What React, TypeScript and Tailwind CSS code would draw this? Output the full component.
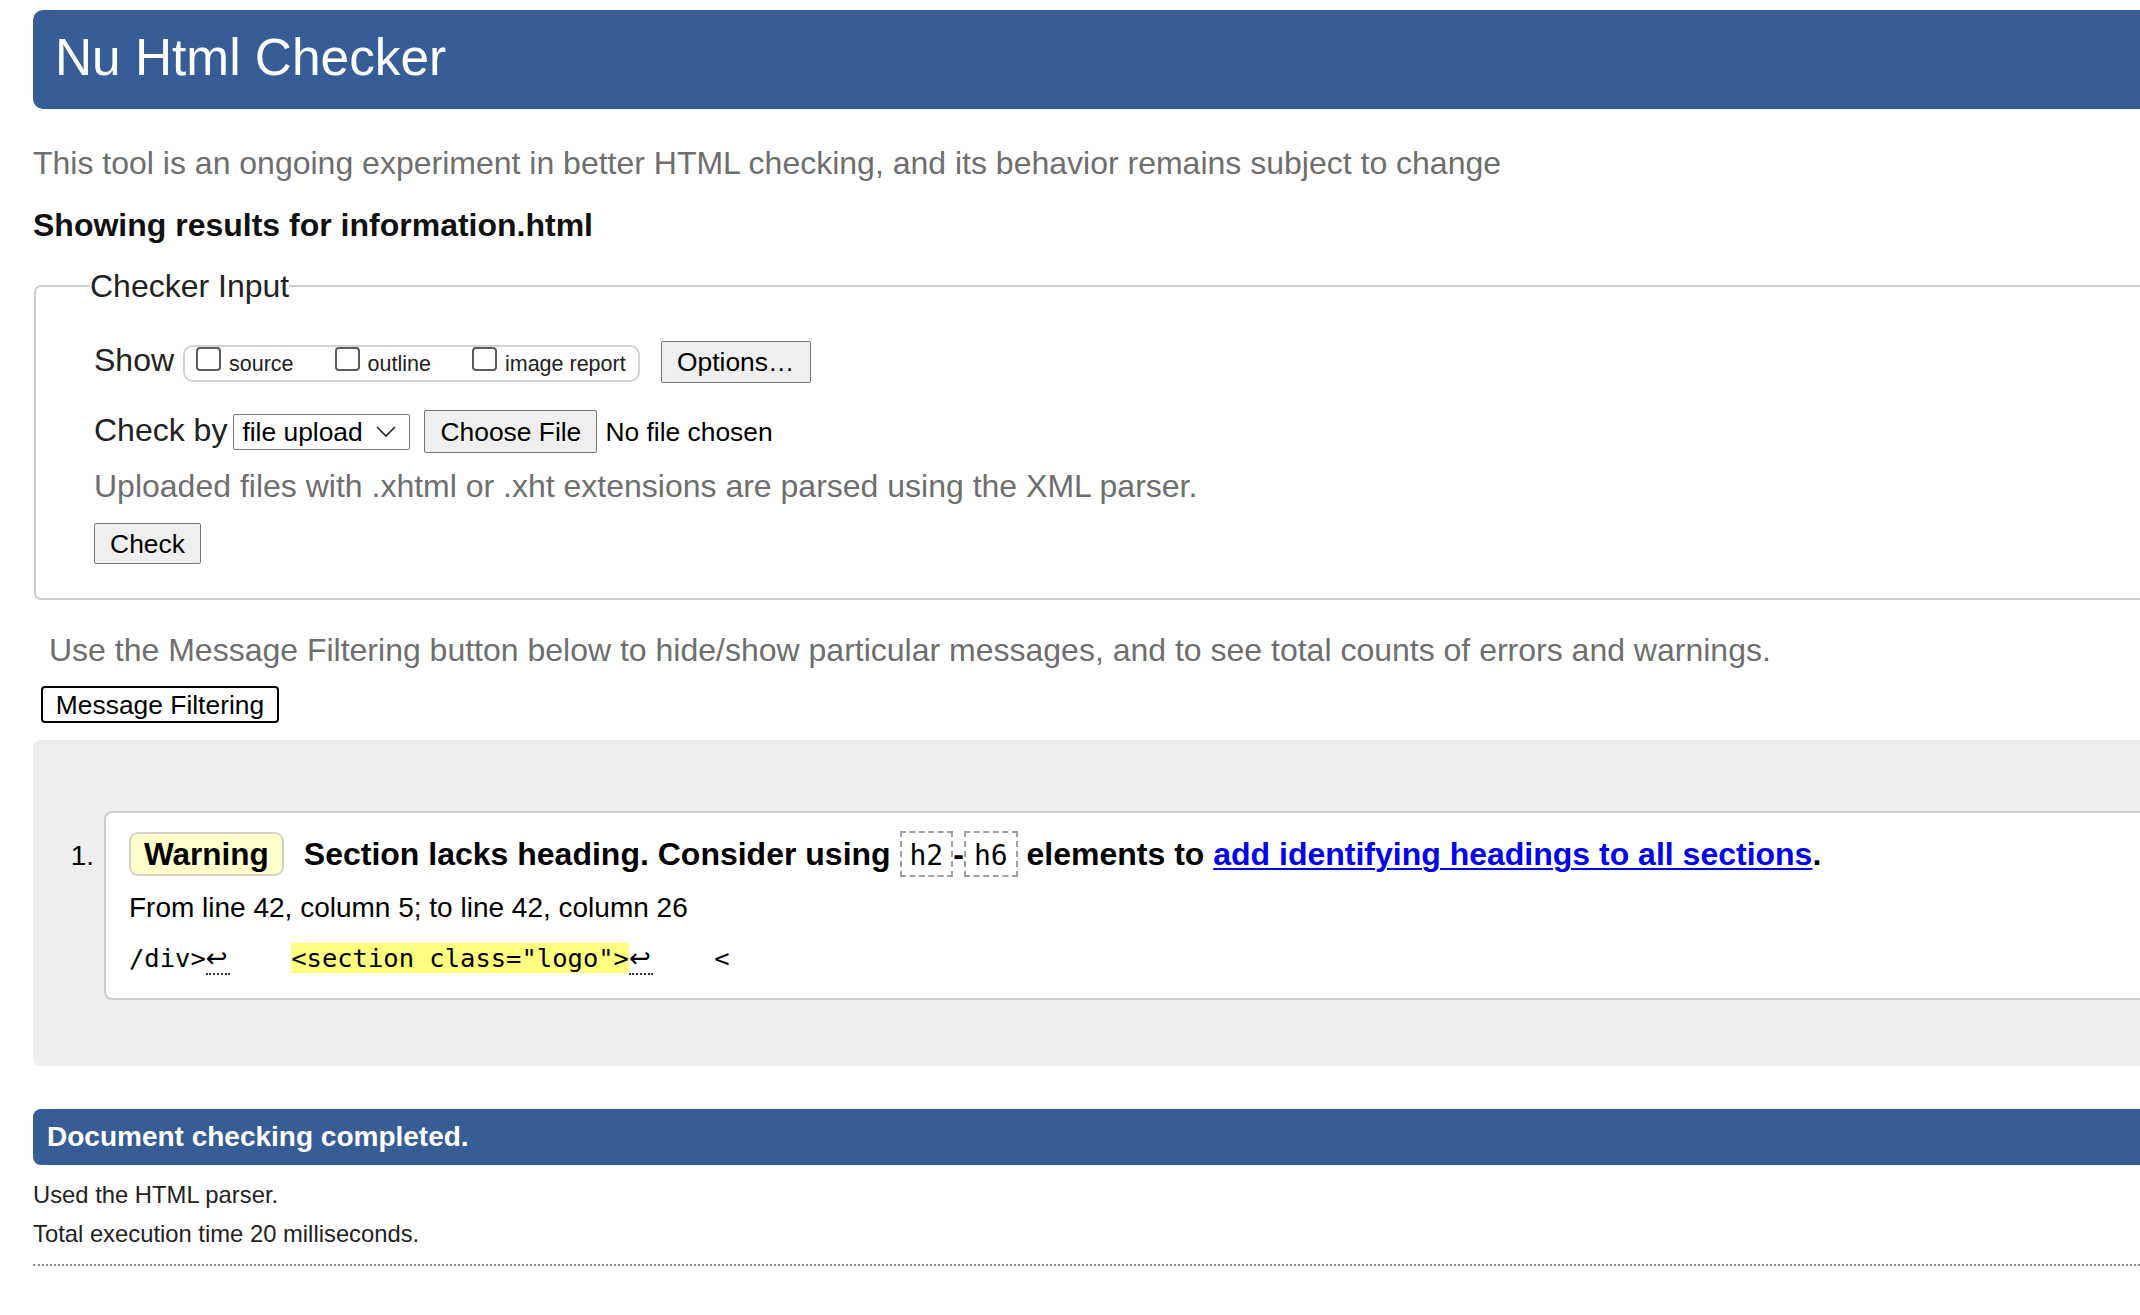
const FONT = "font-['Liberation_Sans',Arial,sans-serif]";
const MONO = "font-['DejaVu_Sans_Mono','Liberation_Mono',monospace]";

function Checkbox({ label, first }: { label: string; first?: boolean }) {
  return (
    <label className={`flex items-baseline ${first ? "" : "ml-[41px]"}`}>
      <span className="h-[24px] w-[25px] rounded-[4px] border-2 border-[#5c5c5c] bg-white" />
      <span className="ml-[8px] text-[21.5px] leading-[24px] text-[#222]">{label}</span>
    </label>
  );
}

function Code({ children }: { children: string }) {
  return (
    <span
      className={`${MONO} inline-block border-2 border-dashed border-[#a0a0a0] px-[8px] pt-[8px] pb-[4px] text-[28px] font-normal leading-[30px]`}
    >
      {children}
    </span>
  );
}

function LineFeed() {
  return (
    <span className="inline-block w-[24px] border-b-2 border-dotted border-[#333] font-['DejaVu_Sans',sans-serif] text-[26px] leading-[30px]">
      ↩
    </span>
  );
}

export default function App() {
  return (
    <div className={`w-full overflow-hidden bg-white text-black ${FONT}`}>
      <div className="w-[2300px] pl-[33px] pt-[10px] pb-[30px]">
        {/* Title bar */}
        <header className="h-[99px] rounded-[10px] bg-[#365d95] pl-[22px] pt-[19px]">
          <h1 className="text-[51.4px] leading-[57px] font-normal text-white">Nu Html Checker</h1>
        </header>

        <p className="mt-[36px] text-[32px] leading-[36px] text-[#6e6e6e]">
          This tool is an ongoing experiment in better HTML checking, and its behavior remains subject to change
        </p>
        <p className="mt-[26px] text-[32px] font-bold leading-[36px] text-[#111]">
          Showing results for information.html
        </p>

        {/* Checker input form */}
        <fieldset className="ml-[1px] mt-[25px] rounded-[7px] border-2 border-[#cccccc] pl-[54px] pt-[37px] pb-[34px]">
          <legend className="text-[32px] leading-[36px] text-[#222]">Checker Input</legend>
          <div className="pl-[4px]">
            <div className="flex items-baseline">
              <span className="text-[32px] leading-[36px] text-[#222]">Show</span>
              <div className="ml-[9px] flex h-[37px] items-baseline rounded-[10px] border-2 border-[#d2d2d2] pl-[11px] pr-[12px]">
                <Checkbox label="source" first />
                <Checkbox label="outline" />
                <Checkbox label="image report" />
              </div>
              <button className="ml-[21px] h-[42px] w-[150px] rounded-[2px] border border-[#767676] bg-[#efefef] text-[26.4px] leading-[30px] text-black">
                Options…
              </button>
            </div>

            <div className="mt-[27px] flex items-baseline">
              <span className="text-[32px] leading-[36px] text-[#222]">Check by</span>
              <div className="ml-[6px] flex h-[36px] w-[177px] items-center justify-between rounded-[2px] border border-[#767676] bg-white pl-[8px] pr-[13px] text-[26.4px] leading-[30px]">
                <span>file upload</span>
                <svg width="20" height="11" viewBox="0 0 20 11" fill="none">
                  <path d="M1 1 L10 10 L19 1" stroke="#222" strokeWidth="1.6" />
                </svg>
              </div>
              <button className="ml-[14px] h-[43px] w-[173px] rounded-[2px] border border-[#767676] bg-[#efefef] text-[26.4px] leading-[30px] text-black">
                Choose File
              </button>
              <span className="ml-[8px] text-[26.4px] leading-[30px]">No file chosen</span>
            </div>

            <p className="mt-[15px] text-[32px] leading-[36px] text-[#6e6e6e]">
              Uploaded files with .xhtml or .xht extensions are parsed using the XML parser.
            </p>

            <button className="mt-[19px] h-[41px] w-[107px] rounded-[2px] border border-[#767676] bg-[#efefef] text-[26.4px] leading-[30px] text-black">
              Check
            </button>
          </div>
        </fieldset>

        <p className="mt-[32px] pl-[16px] text-[32px] leading-[36px] text-[#6e6e6e]">
          Use the Message Filtering button below to hide/show particular messages, and to see total counts of errors and warnings.
        </p>
        <button className="ml-[8px] mt-[18px] h-[37px] w-[238px] rounded-[4px] border-2 border-black bg-white text-[26.4px] leading-[30px] text-black">
          Message Filtering
        </button>

        {/* Results */}
        <div className="mt-[17px] rounded-[8px] bg-[#eeeeee] pt-[71px] pb-[66px]">
          <div className="flex items-baseline">
            <span className="w-[71px] pr-[10px] text-right text-[28px] leading-[34px]">1.</span>
            <div className="flex-1 rounded-[8px] border-2 border-[#cccccc] bg-white pl-[23px] pt-[18px] pb-[22px]">
              <p className="text-[32px] font-bold leading-[36px]">
                <span className="mr-[20px] inline-block rounded-[9px] border-2 border-[#d3d3c4] bg-[#ffffcc] px-[13px] py-[2px] text-[31.5px] leading-[36px]">
                  Warning
                </span>
                Section lacks heading. Consider using <Code>h2</Code>-<Code>h6</Code> elements to{" "}
                <a href="#" className="text-[#0000ee] underline decoration-2 underline-offset-[3px]">
                  add identifying headings to all sections
                </a>
                .
              </p>
              <p className="mt-[14px] text-[28px] leading-[34px]">From line 42, column 5; to line 42, column 26</p>
              <pre className={`${MONO} mt-[15px] text-[25.5px] leading-[36px] text-black`}>
                {"/div>"}
                <LineFeed />
                {"    "}
                <mark className="bg-[#ffff80] text-black">{'<section class="logo">'}</mark>
                <LineFeed />
                {"    <"}
              </pre>
            </div>
          </div>
        </div>

        {/* Summary */}
        <div className="mt-[43px] h-[56px] rounded-[8px] bg-[#365d95] pl-[14px] text-[28px] font-bold leading-[56px] text-white">
          Document checking completed.
        </div>
        <p className="mt-[16px] text-[23.8px] leading-[28px] text-[#222]">Used the HTML parser.</p>
        <p className="mt-[11px] text-[23.8px] leading-[28px] text-[#222]">Total execution time 20 milliseconds.</p>
        <div className="mt-[16px] border-t-2 border-dotted border-[#888]" />
      </div>
    </div>
  );
}
